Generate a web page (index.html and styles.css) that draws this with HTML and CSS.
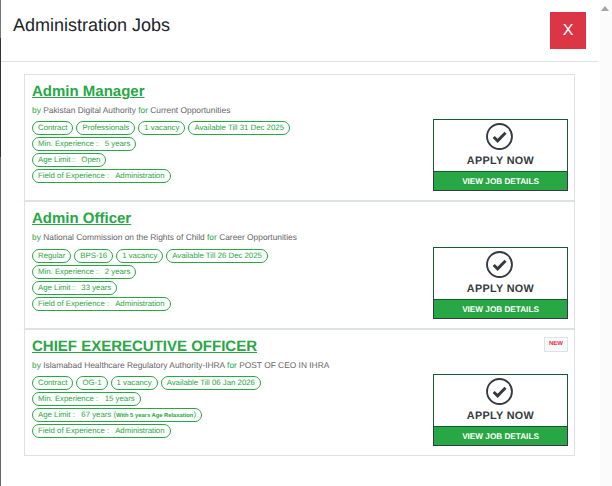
FILE: index.html
```html
<!DOCTYPE html>
<html lang="en">
<head>
<meta charset="utf-8">
<title>Administration Jobs</title>
<link rel="stylesheet" href="styles.css">
</head>
<body>
<div class="page">
  <div class="edge"></div>
  <div class="modal">
    <header class="modal-head">
      <h2 class="modal-title">Administration Jobs</h2>
      <button class="close" type="button">X</button>
    </header>
    <div class="modal-body">
      <div class="list">
        <article class="job">
          <div class="job-info">
            <a class="job-title" href="#">Admin Manager</a>
            <p class="job-by"><span class="g">by</span> Pakistan Digital Authority <span class="g">for</span> Current Opportunities</p>
            <div class="tags">
              <div class="tag-row"><span class="tag">Contract</span><span class="tag">Professionals</span><span class="tag">1 vacancy</span><span class="tag">Available Till 31 Dec 2025</span></div>
              <div class="tag-row"><span class="tag">Min. Experience :&nbsp;&nbsp; 5 years</span></div>
              <div class="tag-row"><span class="tag">Age Limit :&nbsp;&nbsp; Open</span></div>
              <div class="tag-row"><span class="tag">Field of Experience :&nbsp;&nbsp; Administration</span></div>
            </div>
          </div>
          <div class="job-side">
            <a class="apply" href="#">
              <span class="apply-top">
                <svg class="check" viewBox="0 0 26 26" width="27" height="27"><circle cx="13" cy="13" r="12" fill="none" stroke="#343a40" stroke-width="1.8"/><path d="M7.4 13.4l3.8 3.8 7.6-7.8" fill="none" stroke="#343a40" stroke-width="2.8"/></svg>
                <span class="apply-text">APPLY NOW</span>
              </span>
              <span class="apply-bar">VIEW JOB DETAILS</span>
            </a>
          </div>
        </article>
        <article class="job">
          <div class="job-info">
            <a class="job-title" href="#">Admin Officer</a>
            <p class="job-by"><span class="g">by</span> National Commission on the Rights of Child <span class="g">for</span> Career Opportunities</p>
            <div class="tags">
              <div class="tag-row"><span class="tag">Regular</span><span class="tag">BPS-16</span><span class="tag">1 vacancy</span><span class="tag">Available Till 26 Dec 2025</span></div>
              <div class="tag-row"><span class="tag">Min. Experience :&nbsp;&nbsp; 2 years</span></div>
              <div class="tag-row"><span class="tag">Age Limit :&nbsp;&nbsp; 33 years</span></div>
              <div class="tag-row"><span class="tag">Field of Experience :&nbsp;&nbsp; Administration</span></div>
            </div>
          </div>
          <div class="job-side">
            <a class="apply" href="#">
              <span class="apply-top">
                <svg class="check" viewBox="0 0 26 26" width="27" height="27"><circle cx="13" cy="13" r="12" fill="none" stroke="#343a40" stroke-width="1.8"/><path d="M7.4 13.4l3.8 3.8 7.6-7.8" fill="none" stroke="#343a40" stroke-width="2.8"/></svg>
                <span class="apply-text">APPLY NOW</span>
              </span>
              <span class="apply-bar">VIEW JOB DETAILS</span>
            </a>
          </div>
        </article>
        <article class="job">
          <div class="job-info">
            <a class="job-title" href="#">CHIEF EXERECUTIVE OFFICER</a>
            <p class="job-by"><span class="g">by</span> Islamabad Healthcare Regulatory Authority-IHRA <span class="g">for</span> POST OF CEO IN IHRA</p>
            <div class="tags">
              <div class="tag-row"><span class="tag">Contract</span><span class="tag">OG-1</span><span class="tag">1 vacancy</span><span class="tag">Available Till 06 Jan 2026</span></div>
              <div class="tag-row"><span class="tag">Min. Experience :&nbsp;&nbsp; 15 years</span></div>
              <div class="tag-row"><span class="tag">Age Limit :&nbsp;&nbsp; 67 years (<b class="tag-note">With 5 years Age Relaxation</b>)</span></div>
              <div class="tag-row"><span class="tag">Field of Experience :&nbsp;&nbsp; Administration</span></div>
            </div>
          </div>
          <div class="job-side">
            <span class="new">NEW</span>
            <a class="apply" href="#">
              <span class="apply-top">
                <svg class="check" viewBox="0 0 26 26" width="27" height="27"><circle cx="13" cy="13" r="12" fill="none" stroke="#343a40" stroke-width="1.8"/><path d="M7.4 13.4l3.8 3.8 7.6-7.8" fill="none" stroke="#343a40" stroke-width="2.8"/></svg>
                <span class="apply-text">APPLY NOW</span>
              </span>
              <span class="apply-bar">VIEW JOB DETAILS</span>
            </a>
          </div>
        </article>
      </div>
    </div>
  </div>
  <div class="scrollbar"><span class="arrow"></span></div>
</div>
</body>
</html>
```
FILE: styles.css
```css
* { box-sizing: border-box; }
html, body { margin: 0; height: 100%; overflow: hidden; }
body { font-family: "Liberation Sans", Arial, sans-serif; background: #fff; color: #212529; text-rendering: geometricPrecision; }
.page { display: flex; width: 612px; height: 486px; }
.edge { width: 1px; height: 486px; background: linear-gradient(#777 0 38px, #333 38px 157px, #666 157px); }
.modal { width: 597px; height: 486px; background: #fff; }
.modal-head { display: flex; justify-content: space-between; align-items: flex-start; height: 62px; padding: 12px 12px 0 12px; border-bottom: 1px solid #dee2e6; }
.modal-title { margin: 0; font-size: 18px; font-weight: 400; line-height: 27px; color: #212529; }
.close { width: 36px; height: 37px; border: 0; padding: 0; background: #dc3545; color: #fff; font: 400 16px/37px "Liberation Sans", Arial, sans-serif; text-rendering: geometricPrecision; }
.modal-body { padding: 12px 23px 0 23px; }
.list { border: 1px solid #dee2e6; width: 551px; height: 382px; }
.job { display: flex; justify-content: space-between; height: 127.3px; padding: 7px 6px 0 7px; border-bottom: 2px solid #dee2e6; }
.job:last-child { height: 125.7px; border-bottom: 0; }
.job-title { display: block; font-size: 15px; font-weight: 700; line-height: 19px; color: #28a745; text-decoration: underline; }
.job-by { margin: 4px 0 0; font-size: 8.4px; line-height: 11px; color: #666; }
.g { color: #28a745; }
.tags { margin-top: 5.4px; display: flex; flex-direction: column; gap: 2px; }
.tag-row { display: flex; gap: 3px; }
.tag { height: 14px; padding: 0 5px; border: 1px solid #28a745; border-radius: 8px; font-size: 7.8px; line-height: 11px; color: #28a745; white-space: nowrap; }
.tag-note { font-size: 5.8px; }
.job-side { display: flex; flex-direction: column; align-items: flex-end; justify-content: flex-end; padding-bottom: 9px; }
.job:last-child .job-side { justify-content: space-between; }
.new { width: 24px; height: 15px; border: 1px solid #dee2e6; background: #f8f9fa; color: #dc3545; font-size: 6px; font-weight: 700; line-height: 13px; text-align: center; }
.apply { display: flex; flex-direction: column; width: 135px; height: 72px; border: 1px solid #145a32; border-bottom: 0; text-decoration: none; }
.apply-top { display: flex; flex: 1; flex-direction: column; align-items: center; padding-top: 3px; }
.check { margin-left: -2px; }
.apply-text { margin-top: 5px; font-size: 10.8px; font-weight: 700; letter-spacing: .35px; line-height: 13px; color: #343a40; }
.apply-bar { height: 20px; margin: 0 -1px; background: #28a745; border: 1px solid #343a40; border-top-color: #145a32; color: #fff; font-size: 8.2px; font-weight: 700; line-height: 19px; text-align: center; }
.scrollbar { width: 14px; height: 486px; background: linear-gradient(90deg, #fff 0 2px, #fbfbfb 2px); display: flex; justify-content: center; padding-top: 6px; }
.arrow { width: 0; height: 0; border-left: 4.5px solid transparent; border-right: 4.5px solid transparent; border-bottom: 5px solid #a3a3a3; }
```
